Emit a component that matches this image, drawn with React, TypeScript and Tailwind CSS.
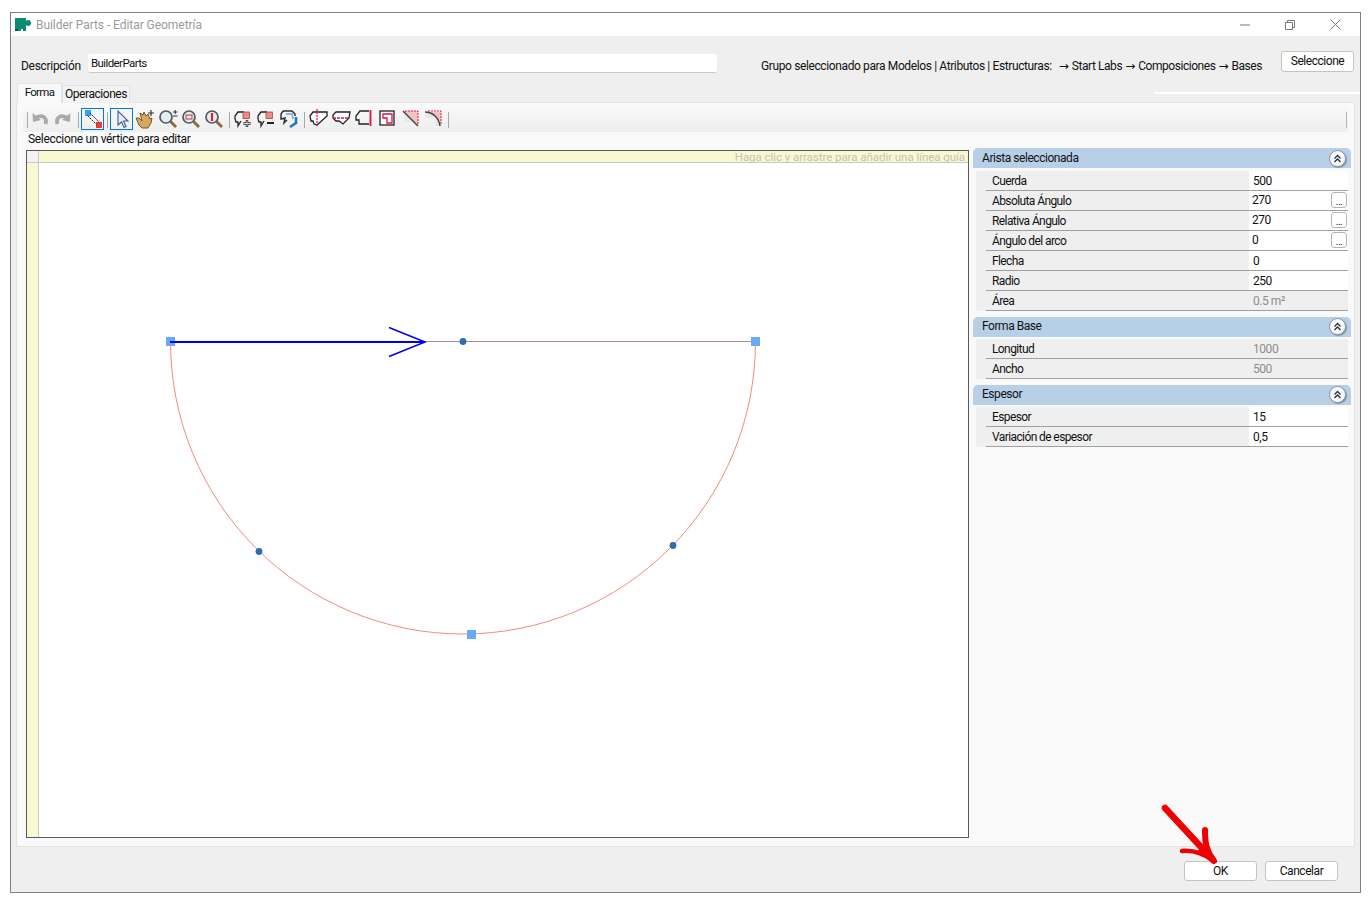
import type { ReactNode } from "react";

// toolbar icons are 20x20 drawings
function Svg({ children }: { children: ReactNode }) {
  return (
    <svg width="20" height="20" viewBox="0 0 20 20" fill="none">
      {children}
    </svg>
  );
}

function Sep({ first }: { first?: boolean }) {
  return <div className={first ? "w-px h-[16px] bg-[#a9a9a9] mr-[0px]" : "w-px h-[16px] bg-[#a9a9a9] ml-[4px] mr-[1px]"} />;
}

function Cell({ children, active }: { children: ReactNode; active?: boolean }) {
  return (
    <div
      className={
        active
          ? "w-[23px] h-[22px] mb-[1px] flex items-center justify-center border border-[#0078d7]"
          : "w-[23px] h-[22px] mb-[1px] flex items-center justify-center"
      }
    >
      {children}
    </div>
  );
}

function Undo({ flip }: { flip?: boolean }) {
  return (
    <Svg>
      <g transform={flip ? "translate(20 0) scale(-1 1)" : undefined}>
        <path d="M15.500 15c2-6-3-10-9-6.500" stroke="#a9a9a9" strokeWidth="3.800" />
        <path d="M2.500 4l.5 9 8-2z" fill="#a9a9a9" />
      </g>
    </Svg>
  );
}

function Magnifier({ children }: { children?: ReactNode }) {
  return (
    <Svg>
      <circle cx="8" cy="8" r="6" fill="#e4edf2" stroke="#4d5a60" strokeWidth="1.700" />
      <path d="M12.500 12.500l5.500 5.500" stroke="#8a6a36" strokeWidth="2.800" />
      {children}
    </Svg>
  );
}

function Bubble({ children }: { children?: ReactNode }) {
  return (
    <Svg>
      <path d="M2 10V7l3-4h6M8 12l-3 5v-4H3l-1-3" stroke="#222" strokeWidth="1.300" />
      <rect x="10" y="3" width="6.500" height="6.500" fill="#f08a8a" stroke="#8a3a3a" strokeWidth="0.700" />
      {children}
    </Svg>
  );
}

function Toolbar() {
  return (
    <div className="mx-[6px] mt-[4px] h-[25px] flex items-center pl-[4px] rounded-[3px] bg-gradient-to-b from-[#f8f8f8] to-[#eeeeee]">
      <Sep first />
      <Cell><Undo /></Cell>
      <Cell><Undo flip /></Cell>
      <div className="w-px h-[16px] bg-[#a9a9a9] ml-[4px] mr-[2px]" />
      <Cell active>
        <Svg>
          <rect x="2" y="1" width="6" height="6" fill="#35a0f0" />
          <rect x="13" y="13" width="6" height="6" fill="#f03a30" />
          <path d="M7 4l9 9M4.500 6.500l9 9" stroke="#222" strokeWidth="1" strokeDasharray="2 1" />
        </Svg>
      </Cell>
      <div className="w-px h-[16px] bg-[#a9a9a9] ml-[3px] mr-[2px]" />
      <Cell active>
        <Svg>
          <path d="M6 2v14l3.500-3 2.500 5.500 2-1-2.500-5.500h4.500z" fill="#e8eef8" stroke="#3d5f92" strokeWidth="1.100" />
        </Svg>
      </Cell>
      <Cell>
        <Svg>
          <path d="M1 9l3 7 3 3h6l3-5 1-5-2 1-2-5-2 2-2-4-1 3-3-2 2 8-3-3z" fill="#d8a860" stroke="#6a4a20" strokeWidth="0.900" />
          <path d="M16 1v6M13 4h6" stroke="#333" strokeWidth="1.200" />
        </Svg>
      </Cell>
      <Cell>
        <Magnifier>
          <path d="M15 3h4.500M17.250 1v4M15 7h4.500" stroke="#333" strokeWidth="1" />
        </Magnifier>
      </Cell>
      <Cell>
        <Magnifier>
          <rect x="5" y="6" width="6" height="4" stroke="#c33" strokeWidth="1" />
        </Magnifier>
      </Cell>
      <Cell>
        <Magnifier>
          <path d="M8 4v8" stroke="#d23" strokeWidth="2.200" />
        </Magnifier>
      </Cell>
      <Sep />
      <Cell>
        <Bubble>
          <path d="M14 11v7M10.500 14.500h7" stroke="#222" strokeWidth="2.400" />
          <path d="M14 11.500v6M11 14.500h6" stroke="#fff" strokeWidth="0.800" />
        </Bubble>
      </Cell>
      <Cell>
        <Bubble>
          <path d="M11 14h7" stroke="#222" strokeWidth="2" />
        </Bubble>
      </Cell>
      <Cell>
        <Svg>
          <path d="M4 2h9l3 3v2M4 2L2 5v5l4-1-1 5 3-3" stroke="#333" strokeWidth="1.500" />
          <path d="M17 8v6l-6 4" stroke="#1c78c0" strokeWidth="2.600" />
          <path d="M7 5h6l1 5" stroke="#8fb6d8" strokeWidth="2" />
        </Svg>
      </Cell>
      <Sep />
      <Cell>
        <Svg>
          <path d="M2 7l3-4h14v4l-10 9-3-1-1-3H3z" fill="#fff" stroke="#222" strokeWidth="1.300" />
          <path d="M9 0v18" stroke="#e01040" strokeWidth="1.200" strokeDasharray="2 1" />
        </Svg>
      </Cell>
      <Cell>
        <Svg>
          <path d="M5 3h14l-1 6-6 6-4-3H5L2 9V6z" fill="#fff" stroke="#222" strokeWidth="1.300" />
          <path d="M2 9h16" stroke="#e01040" strokeWidth="1.400" strokeDasharray="3 1" />
        </Svg>
      </Cell>
      <Cell>
        <Svg>
          <path d="M15 2H6L2 7v4h3v4h10" stroke="#222" strokeWidth="1.300" />
          <path d="M16.500 1v16" stroke="#e01040" strokeWidth="1.800" />
        </Svg>
      </Cell>
      <Cell>
        <Svg>
          <rect x="3" y="2" width="14" height="14" fill="#fff" stroke="#222" strokeWidth="1.300" />
          <path d="M6 5h9v9h-5V9H6z" fill="#fff" stroke="#e01040" strokeWidth="1.300" />
        </Svg>
      </Cell>
      <Cell>
        <Svg>
          <path d="M4 2h14v14z" fill="#f5c2c2" />
          <path d="M2 3h2v10h12v3z" fill="#e8e8e8" />
          <path d="M3 2l15 15" stroke="#444" strokeWidth="1.500" />
          <path d="M5 2h13v13" stroke="#e01040" strokeWidth="1" strokeDasharray="2 1" />
        </Svg>
      </Cell>
      <Cell>
        <Svg>
          <path d="M3 3h15v14c-1-8-6-13-15-14z" fill="#f5c2c2" />
          <path d="M2 9h10v8h5c-1-8-6-13-15-14z" fill="#e8e8e8" />
          <path d="M2 3c8 0 14 6 15 14" stroke="#444" strokeWidth="1.500" />
          <path d="M5 2h13v13" stroke="#e01040" strokeWidth="1" strokeDasharray="2 1" />
        </Svg>
      </Cell>
      <Sep />
      <div className="ml-auto mr-[1px] w-px h-[16px] bg-[#b5b5b5]" />
    </div>
  );
}

function Drawing() {
  return (
    <svg className="block" width="929" height="674" viewBox="39 163 929 674" fill="none">
      <rect x="166" y="337" width="9" height="9" fill="#6aa9f5" />
      <path d="M170.500 341.500A292.500 292.500 0 0 0 755.500 341.500" stroke="#f58a80" strokeWidth="1" />
      <path d="M425 341.500H755.500" stroke="#b08a90" strokeWidth="1" />
      <path d="M170 342H425" stroke="#0000ee" strokeWidth="2.200" />
      <path d="M389 327.500L425 342 389 356.500" stroke="#0000ee" strokeWidth="1.500" />
      <rect x="751" y="337" width="9" height="9" fill="#6aa9f5" />
      <rect x="467" y="630" width="9" height="9" fill="#6aa9f5" />
      <circle cx="463" cy="341.500" r="3.400" fill="#2e6db4" />
      <circle cx="259" cy="551.500" r="3.400" fill="#2e6db4" />
      <circle cx="673" cy="545.500" r="3.400" fill="#2e6db4" />
    </svg>
  );
}

function Canvas() {
  return (
    <div className="w-[943px] h-[688px] border border-[#5a5a5a] bg-white flex flex-col shrink-0">
      <div className="flex h-[12px] border-b border-[#c8c8c8]">
        <div className="w-[12px] border-r border-[#c8c8c8] bg-[#f2f2f2]" />
        <div className="flex-1 bg-[#f8f8d2] text-right pr-[3px] text-[11.5px] tracking-[-0.05px] leading-[12px] text-[#c4c4b4] whitespace-nowrap">
          Haga clic y arrastre para añadir una línea guía
        </div>
      </div>
      <div className="flex flex-1">
        <div className="w-[12px] border-r border-[#c8c8c8] bg-[#f8f8d2]" />
        <Drawing />
      </div>
    </div>
  );
}

type Row = { label: string; value: string; muted?: boolean; more?: boolean };

function Section({ title, rows, className, first }: { title: string; rows: Row[]; className?: string; first?: boolean }) {
  return (
    <div className={className}>
      <div
        className={
          first
            ? "h-[20px] rounded-t-[5px] bg-[#b8cfe8] flex items-center pl-[9px] pr-[5px] text-[#111]"
            : "h-[20px] pb-[2px] rounded-t-[5px] bg-[#b8cfe8] flex items-center pl-[9px] pr-[5px] text-[#111]"
        }
      >
        <span>{title}</span>
        <span className="ml-auto w-[17px] h-[17px] rounded-full bg-[#fbfbfb] border border-[#8a94a0] flex items-center justify-center shadow-[1px_1px_1px_#7f93aa]">
          <svg width="9" height="9" viewBox="0 0 9 9" fill="none">
            <path d="M1.500 4.500l3-3 3 3M1.500 8l3-3 3 3" stroke="#1f2f4a" strokeWidth="1.300" />
          </svg>
        </span>
      </div>
      <div className={first ? "mt-[3px] mx-[3px] bg-[#efefef]" : "mt-[2px] mx-[3px] bg-[#efefef]"}>
        {rows.map((r) => (
          <div key={r.label} className="flex h-[20px]">
            <div className="w-[10px]" />
            <div className="flex flex-1 border-b border-[#a0a0a0]">
              <div className="w-[263px] pl-[6px] text-[#111] leading-[21px] tracking-[-0.6px] whitespace-nowrap">{r.label}</div>
              <div
                className={
                  r.muted
                    ? "flex-1 pl-[4px] leading-[21px] text-[#8c8c8c]"
                    : r.more
                      ? "flex-1 pl-[3px] leading-[18px] bg-white text-[#111] flex justify-between"
                      : "flex-1 pl-[4px] leading-[20px] bg-white text-[#111] flex justify-between"
                }
              >
                <span>{r.value}</span>
                {r.more && (
                  <span className="w-[16px] h-[16px] mt-[1px] mr-[1px] rounded-[3px] bg-white border border-[#b5b5b5] text-[10px] leading-[18px] text-center">
                    ...
                  </span>
                )}
              </div>
            </div>
          </div>
        ))}
      </div>
    </div>
  );
}

const edge: Row[] = [
  { label: "Cuerda", value: "500" },
  { label: "Absoluta Ángulo", value: "270", more: true },
  { label: "Relativa Ángulo", value: "270", more: true },
  { label: "Ángulo del arco", value: "0", more: true },
  { label: "Flecha", value: "0" },
  { label: "Radio", value: "250" },
  { label: "Área", value: "0.5 m²", muted: true },
];

const base: Row[] = [
  { label: "Longitud", value: "1000", muted: true },
  { label: "Ancho", value: "500", muted: true },
];

const thickness: Row[] = [
  { label: "Espesor", value: "15" },
  { label: "Variación de espesor", value: "0,5" },
];

function Arrow() {
  return <span className="font-['DejaVu_Sans',sans-serif] tracking-[0] mx-[3px]">→</span>;
}

export default function App() {
  return (
    <div className="relative w-[1369px] h-[905px] bg-white pt-[12px] pl-[10px] overflow-hidden font-['Roboto',sans-serif] text-[12px] tracking-[-0.45px]">
      <div className="w-[1351px] h-[881px] border border-[#7f7f7f] bg-[#efefef] flex flex-col">
        {/* title bar */}
        <div className="h-[23px] bg-white flex items-center pl-[4px] shrink-0">
          <svg width="17" height="13" viewBox="0 0 17 13">
            <path d="M0 0h11v3c2-2 5-1 5 2s-3 4-5 2v6H8c1-3-3-3-2 0H3c0-2-1-2-3-2z" fill="#0c8a72" />
            <path d="M0 11h3v2H0z" fill="#0b4a57" />
          </svg>
          <span className="ml-[4px] text-[12px] text-[#9b9b9b] tracking-[-0.05px]">Builder Parts - Editar Geometría</span>
          <div className="ml-auto flex items-center gap-[35px] pr-[19px]">
            <svg width="10" height="10" viewBox="0 0 10 10"><path d="M0 5h10" stroke="#777" /></svg>
            <svg width="10" height="10" viewBox="0 0 10 10" fill="none">
              <path d="M.5 2.500h7v7h-7zM2.500 2.500v-2h7v7h-2" stroke="#777" />
            </svg>
            <svg width="11" height="11" viewBox="0 0 11 11"><path d="M.5.500l10 10M10.500.500l-10 10" stroke="#777" /></svg>
          </div>
        </div>

        {/* description row */}
        <div className="h-[47px] flex items-start pl-[10px] shrink-0">
          <span className="w-[60px] mt-[22px] leading-[16px] text-[12px] tracking-[-0.3px] text-[#111]">Descripción</span>
          <div className="ml-[7px] mt-[18px] w-[629px] h-[19px] bg-white border-b border-[#c9c9c9] rounded-[2px] pl-[3px] leading-[18px] text-[11.5px] tracking-[-0.6px] text-[#111]">
            BuilderParts
          </div>
          <span className="ml-[44px] mt-[22px] leading-[16px] text-[#111] whitespace-nowrap">
            <span className="tracking-[-0.38px]">Grupo seleccionado para Modelos | Atributos | Estructuras:</span>
            <span className="ml-[4px]" />
            <Arrow />Start Labs<Arrow />Composiciones<Arrow />Bases
          </span>
          <div className="ml-auto mr-[6px] mt-[15px] w-[73px] h-[21px] bg-white border border-[#c4c4c4] rounded-[3px] text-center leading-[18px] text-[#111]">
            Seleccione
          </div>
        </div>

        {/* tabs */}
        <div className="h-[20px] flex items-end pl-[6px] shrink-0 -mb-px relative">
          <div className="w-[45px] h-[20px] bg-[#f9f9f9] border border-b-0 border-[#e3e3e3] text-center leading-[16px] text-[11.5px] tracking-[-0.7px] text-[#111]">Forma</div>
          <div className="w-[68px] h-[18px] bg-[#f3f3f3] border border-b-0 border-[#e3e3e3] text-center leading-[17px] text-[#111]">Operaciones</div>
          <div className="ml-auto w-[206px] h-[2px] mb-[9px] bg-white" />
        </div>

        {/* main panel */}
        <div className="mx-[5px] h-[745px] border border-[#e3e3e3] bg-[#f9f9f9] shrink-0">
          <Toolbar />
          <div className="h-[16px] pl-[11px] leading-[14px] tracking-[-0.33px] text-[#111]">Seleccione un vértice para editar</div>
          <div className="flex items-start pl-[9px]">
            <div className="mt-[2px]">
              <Canvas />
            </div>
            <div className="ml-[4px] w-[378px]">
              <Section title="Arista seleccionada" rows={edge} first />
              <Section title="Forma Base" rows={base} className="mt-[6px]" />
              <Section title="Espesor" rows={thickness} className="mt-[6px]" />
            </div>
          </div>
        </div>

        {/* footer */}
        <div className="flex justify-end gap-[8px] pr-[22px] pt-[14px]">
          <div className="w-[73px] h-[20px] bg-white border border-[#c4c4c4] rounded-[3px] text-center leading-[18px] text-[#111]">OK</div>
          <div className="w-[73px] h-[20px] bg-white border border-[#c4c4c4] rounded-[3px] text-center leading-[18px] text-[#111]">Cancelar</div>
        </div>
      </div>

      {/* red annotation arrow */}
      <svg className="absolute left-[1155px] top-[798px]" width="70" height="70" viewBox="1155 798 70 70" fill="none">
        <path d="M1165 808L1213 860" stroke="#f00000" strokeWidth="6.500" strokeLinecap="round" />
        <path d="M1205 830C1205 842 1206 851 1214 861" stroke="#f00000" strokeWidth="6" strokeLinecap="round" />
        <path d="M1182 851C1193 850 1203 853 1214 861" stroke="#f00000" strokeWidth="4.500" strokeLinecap="round" />
        <path d="M1197 851L1214 862 1206 843z" fill="#f00000" />
      </svg>
    </div>
  );
}
